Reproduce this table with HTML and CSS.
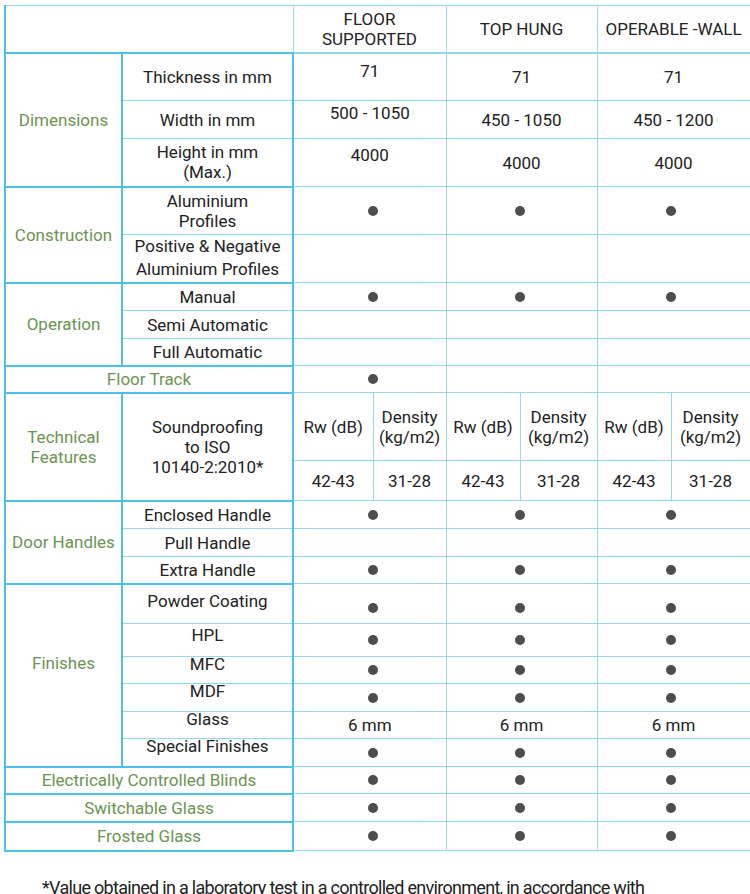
FILE: index.html
```html
<!DOCTYPE html>
<html lang="en">
<head>
<meta charset="utf-8">
<title>Specifications</title>
<link rel="stylesheet" href="styles.css">
</head>
<body>
<table class="spec">
  <colgroup>
    <col class="c-grp"><col class="c-item">
    <col class="c-a1"><col class="c-a2">
    <col class="c-b1"><col class="c-b2">
    <col class="c-c1"><col class="c-c2">
  </colgroup>
  <thead>
    <tr class="h47">
      <th class="blank" colspan="2"></th>
      <th class="prod" colspan="2">FLOOR<br>SUPPORTED</th>
      <th class="prod" colspan="2">TOP HUNG</th>
      <th class="prod" colspan="2">OPERABLE -WALL</th>
    </tr>
  </thead>
  <tbody>
    <tr class="h48">
      <th class="grp" rowspan="3">Dimensions</th>
      <td class="item first">Thickness in mm</td>
      <td colspan="2" class="val raise-a">71</td>
      <td colspan="2" class="val">71</td>
      <td colspan="2" class="val">71</td>
    </tr>
    <tr class="h38">
      <td class="item">Width in mm</td>
      <td colspan="2" class="val raise-b">500 - 1050</td>
      <td colspan="2" class="val">450 - 1050</td>
      <td colspan="2" class="val">450 - 1200</td>
    </tr>
    <tr class="h48">
      <td class="item">Height in mm<br>(Max.)</td>
      <td colspan="2" class="val raise-c">4000</td>
      <td colspan="2" class="val">4000</td>
      <td colspan="2" class="val">4000</td>
    </tr>

    <tr class="h48">
      <th class="grp" rowspan="2">Construction</th>
      <td class="item first">Aluminium<br>Profiles</td>
      <td colspan="2" class="val da"><span class="dot"></span></td>
      <td colspan="2" class="val db"><span class="dot"></span></td>
      <td colspan="2" class="val dc"><span class="dot"></span></td>
    </tr>
    <tr class="h48">
      <td class="item loose">Positive &amp; Negative<br>Aluminium Profiles</td>
      <td colspan="2" class="val"></td>
      <td colspan="2" class="val"></td>
      <td colspan="2" class="val"></td>
    </tr>

    <tr class="h28">
      <th class="grp" rowspan="3">Operation</th>
      <td class="item first">Manual</td>
      <td colspan="2" class="val da"><span class="dot"></span></td>
      <td colspan="2" class="val db"><span class="dot"></span></td>
      <td colspan="2" class="val dc"><span class="dot"></span></td>
    </tr>
    <tr class="h28">
      <td class="item">Semi Automatic</td>
      <td colspan="2" class="val"></td>
      <td colspan="2" class="val"></td>
      <td colspan="2" class="val"></td>
    </tr>
    <tr class="h27">
      <td class="item">Full Automatic</td>
      <td colspan="2" class="val"></td>
      <td colspan="2" class="val"></td>
      <td colspan="2" class="val"></td>
    </tr>

    <tr class="h27">
      <th class="wide" colspan="2">Floor Track</th>
      <td colspan="2" class="val da"><span class="dot"></span></td>
      <td colspan="2" class="val"></td>
      <td colspan="2" class="val"></td>
    </tr>

    <tr class="h68">
      <th class="grp" rowspan="2">Technical<br>Features</th>
      <td class="item first" rowspan="2">Soundproofing<br>to ISO<br>10140-2:2010*</td>
      <td class="val sub">Rw (dB)</td>
      <td class="val sub">Density<br>(kg/m2)</td>
      <td class="val sub">Rw (dB)</td>
      <td class="val sub">Density<br>(kg/m2)</td>
      <td class="val sub">Rw (dB)</td>
      <td class="val sub">Density<br>(kg/m2)</td>
    </tr>
    <tr class="h40">
      <td class="val sub">42-43</td>
      <td class="val sub">31-28</td>
      <td class="val sub">42-43</td>
      <td class="val sub">31-28</td>
      <td class="val sub">42-43</td>
      <td class="val sub">31-28</td>
    </tr>

    <tr class="h28">
      <th class="grp" rowspan="3">Door Handles</th>
      <td class="item first">Enclosed Handle</td>
      <td colspan="2" class="val da"><span class="dot"></span></td>
      <td colspan="2" class="val db"><span class="dot"></span></td>
      <td colspan="2" class="val dc"><span class="dot"></span></td>
    </tr>
    <tr class="h28">
      <td class="item">Pull Handle</td>
      <td colspan="2" class="val"></td>
      <td colspan="2" class="val"></td>
      <td colspan="2" class="val"></td>
    </tr>
    <tr class="h27">
      <td class="item">Extra Handle</td>
      <td colspan="2" class="val da"><span class="dot"></span></td>
      <td colspan="2" class="val db"><span class="dot"></span></td>
      <td colspan="2" class="val dc"><span class="dot"></span></td>
    </tr>

    <tr class="h40">
      <th class="grp fin" rowspan="6">Finishes</th>
      <td class="item first fin-item fin-a">Powder Coating</td>
      <td colspan="2" class="val da low"><span class="dot"></span></td>
      <td colspan="2" class="val db low"><span class="dot"></span></td>
      <td colspan="2" class="val dc low"><span class="dot"></span></td>
    </tr>
    <tr class="h33">
      <td class="item fin-item fin-b">HPL</td>
      <td colspan="2" class="val da"><span class="dot"></span></td>
      <td colspan="2" class="val db"><span class="dot"></span></td>
      <td colspan="2" class="val dc"><span class="dot"></span></td>
    </tr>
    <tr class="h27">
      <td class="item fin-item">MFC</td>
      <td colspan="2" class="val da"><span class="dot"></span></td>
      <td colspan="2" class="val db"><span class="dot"></span></td>
      <td colspan="2" class="val dc"><span class="dot"></span></td>
    </tr>
    <tr class="h28">
      <td class="item fin-item">MDF</td>
      <td colspan="2" class="val da"><span class="dot"></span></td>
      <td colspan="2" class="val db"><span class="dot"></span></td>
      <td colspan="2" class="val dc"><span class="dot"></span></td>
    </tr>
    <tr class="h27">
      <td class="item fin-item">Glass</td>
      <td colspan="2" class="val">6 mm</td>
      <td colspan="2" class="val">6 mm</td>
      <td colspan="2" class="val">6 mm</td>
    </tr>
    <tr class="h28">
      <td class="item fin-item">Special Finishes</td>
      <td colspan="2" class="val da"><span class="dot"></span></td>
      <td colspan="2" class="val db"><span class="dot"></span></td>
      <td colspan="2" class="val dc"><span class="dot"></span></td>
    </tr>

    <tr class="h27">
      <th class="wide" colspan="2">Electrically Controlled Blinds</th>
      <td colspan="2" class="val da"><span class="dot"></span></td>
      <td colspan="2" class="val db"><span class="dot"></span></td>
      <td colspan="2" class="val dc"><span class="dot"></span></td>
    </tr>
    <tr class="h28">
      <th class="wide" colspan="2">Switchable Glass</th>
      <td colspan="2" class="val da"><span class="dot"></span></td>
      <td colspan="2" class="val db"><span class="dot"></span></td>
      <td colspan="2" class="val dc"><span class="dot"></span></td>
    </tr>
    <tr class="h29">
      <th class="wide" colspan="2">Frosted Glass</th>
      <td colspan="2" class="val da"><span class="dot"></span></td>
      <td colspan="2" class="val db"><span class="dot"></span></td>
      <td colspan="2" class="val dc"><span class="dot"></span></td>
    </tr>
  </tbody>
</table>
<p class="note">*Value obtained in a laboratory test in a controlled environment, in accordance with</p>
</body>
</html>
```

FILE: styles.css
```css
html, body {
  margin: 0;
  padding: 0;
  background: #ffffff;
}

body {
  padding: 5px 0 0 4px;
  font-family: Roboto, "Liberation Sans", Arial, sans-serif;
  color: #222222;
  overflow: hidden;
}

.spec {
  border-collapse: collapse;
  table-layout: fixed;
  width: 745px;
  font-size: 17px;
  line-height: 20px;
}

.c-grp { width: 117px; }
.c-item { width: 171px; }
.c-a1 { width: 80px; }
.c-a2 { width: 73px; }
.c-b1 { width: 74px; }
.c-b2 { width: 77px; }
.c-c1 { width: 74px; }
.c-c2 { width: 79px; }

.spec th,
.spec td {
  padding: 0 2px;
  text-align: center;
  vertical-align: middle;
  font-weight: normal;
  border: 1px solid #96d7f1;
}

.spec .h47 { height: 47px; }
.spec .h48 { height: 48px; }
.spec .h38 { height: 38px; }
.spec .h28 { height: 28px; }
.spec .h27 { height: 27px; }
.spec .h29 { height: 29px; }
.spec .h33 { height: 33px; }
.spec .h40 { height: 40px; }
.spec .h68 { height: 68px; }

.spec .blank {
  border-left: 2px solid #4ec0ee;
  border-bottom: 2px solid #4ec0ee;
}

.spec .prod {
  border-bottom: 2px solid #8fd4f0;
}

.spec .grp,
.spec .wide {
  color: #6a9552;
  border: 2px solid #4ec0ee;
}

.spec .item {
  border-left: 2px solid #4ec0ee;
  border-right: 2px solid #4ec0ee;
}

.spec .item.first {
  border-top: 2px solid #4ec0ee;
}

.spec .val {
  padding-left: 0;
  padding-right: 0;
}

.spec .da { padding-left: 6px; }
.spec .db { padding-right: 3px; }
.spec .dc { padding-right: 5px; }

.spec .raise-a { vertical-align: top; padding-top: 7px; }
.spec .raise-b { vertical-align: top; padding-top: 2px; }
.spec .raise-c { vertical-align: top; padding-top: 6px; }

.spec .loose { line-height: 23px; padding-top: 0; }

.spec .fin { padding-bottom: 24px; }

.spec .fin-item {
  vertical-align: top;
  line-height: 14px;
  padding-top: 0;
}
.spec .fin-a { padding-top: 9px; }
.spec .fin-b { padding-top: 4px; }

.spec .low { padding-top: 8px; }

.dot {
  display: block;
  width: 10px;
  height: 10px;
  margin: 0 auto;
  border-radius: 50%;
  background: #4d4d4d;
}

.note {
  margin: 26px 0 0 38px;
  font-size: 18px;
  letter-spacing: -0.7px;
  line-height: 20px;
  color: #222222;
  white-space: nowrap;
}
```
